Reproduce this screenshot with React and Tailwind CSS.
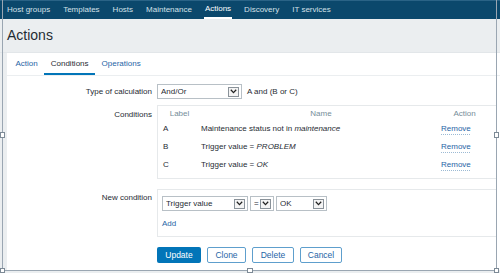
const navItems = ["Host groups", "Templates", "Hosts", "Maintenance", "Actions", "Discovery", "IT services"];

const conditions = [
  { label: "A", name: <>Maintenance status not in <i>maintenance</i></> },
  { label: "B", name: <>Trigger value = <i>PROBLEM</i></> },
  { label: "C", name: <>Trigger value = <i>OK</i></> },
];

function Arrow() {
  return (
    <span className="w-[11px] h-[10px] border border-[#8a9299] bg-[#f4f4f4] flex items-center justify-center shrink-0">
      <svg width="7" height="5" viewBox="0 0 7 5">
        <path d="M0.8 0.8 L3.5 3.6 L6.2 0.8" fill="none" stroke="#222" strokeWidth="1.3" />
      </svg>
    </span>
  );
}

function Select({ value, width }) {
  return (
    <div
      className="h-[15px] border border-[#b8c0c6] bg-white flex items-center pl-[3px] pr-[2px] text-[#1f2c33]"
      style={{ width }}
    >
      <span className="flex-1 truncate">{value}</span>
      <Arrow />
    </div>
  );
}

export default function App() {
  return (
    <div
      className="w-[500px] h-[273px] relative overflow-hidden bg-[#ebeef0] text-[8px] text-[#1f2c33]"
      style={{ fontFamily: '"Liberation Sans", Arial, sans-serif' }}
    >
      <nav className="h-[19px] bg-[#0b486c] border-t border-[#2a6386] flex items-stretch pl-[7px] gap-[13px] text-[8px] text-[#d3e0e8]">
        {navItems.map((item) => (
          <span
            key={item}
            className={
              item === "Actions"
                ? "flex items-center text-white border-b-2 border-white px-[1px] -mx-[1px]"
                : "flex items-center"
            }
          >
            {item}
          </span>
        ))}
      </nav>

      <div className="h-[34px] flex items-center pl-[7px] text-[14px] text-[#1f2c33] border-b border-[#e2e6e9]">
        Actions
      </div>

      <div className="ml-[7px] h-[217px] bg-white">
        <div className="h-[23px] flex items-stretch pl-[2px] border-b border-[#ebeef0]">
          <span className="px-[6.5px] flex items-center text-[#1f65a6]">Action</span>
          <span className="px-[6.5px] flex items-center border-b-2 border-[#0275b8] pt-[2px]">Conditions</span>
          <span className="px-[6.5px] flex items-center text-[#1f65a6]">Operations</span>
        </div>

        <div className="pt-[8px] flex flex-col">
          <div className="flex items-center gap-[5px]">
            <div className="w-[145px] text-right">Type of calculation</div>
            <Select value="And/Or" width="85px" />
            <span>A and (B or C)</span>
          </div>

          <div className="flex gap-[5px] mt-[6px]">
            <div className="w-[145px] text-right pt-[4px]">Conditions</div>
            <div className="flex-1 border border-[#e6e9eb] border-r-0 pt-[2px] pb-[4px] mr-[4px]">
              <div className="grid grid-cols-[43px_240px_1fr] h-[12px] items-center text-[#768d99]">
                <span className="text-center">Label</span>
                <span className="text-center">Name</span>
                <span className="text-center pr-[8px]">Action</span>
              </div>
              {conditions.map((c) => (
                <div key={c.label} className="grid grid-cols-[43px_240px_1fr] h-[18px] items-center">
                  <span className="pl-[5px]">{c.label}</span>
                  <span>{c.name}</span>
                  <span className="text-[#1f65a6] underline decoration-dotted decoration-[#9cbad4] underline-offset-[3px]">
                    Remove
                  </span>
                </div>
              ))}
            </div>
          </div>

          <div className="flex gap-[5px] mt-[10px]">
            <div className="w-[145px] text-right pt-[3px]">New condition</div>
            <div className="flex-1 h-[48px] border border-[#e6e9eb] border-r-0 mr-[4px] pt-[6px] pl-[4px]">
              <div className="flex items-center gap-[2px]">
                <Select value="Trigger value" width="86px" />
                <Select value="=" width="24px" />
                <Select value="OK" width="51px" />
              </div>
              <div className="mt-[7px] text-[#1f65a6]">Add</div>
            </div>
          </div>

          <div className="flex gap-[6px] ml-[150px] mt-[10px] text-[8.5px]">
            <button className="h-[16px] w-[44px] bg-[#0275b8] text-white rounded-[2px]">Update</button>
            <button className="h-[16px] w-[39px] border border-[#5e9fcd] text-[#1f65a6] rounded-[2px]">Clone</button>
            <button className="h-[16px] w-[42px] border border-[#5e9fcd] text-[#1f65a6] rounded-[2px]">Delete</button>
            <button className="h-[16px] w-[42px] border border-[#5e9fcd] text-[#1f65a6] rounded-[2px]">Cancel</button>
          </div>
        </div>
      </div>

      <div className="absolute left-[2px] top-0 w-[495px] h-[271px] border-l border-r border-b border-[#9aa6b2] pointer-events-none" />
      <span className="absolute left-0 top-[132px] w-[5px] h-[6px] bg-white border border-[#7d8a96]" />
      <span className="absolute left-[494px] top-[132px] w-[5px] h-[6px] bg-white border border-[#7d8a96]" />
      <span className="absolute left-[247px] top-[268px] w-[6px] h-[5px] bg-white border border-[#7d8a96]" />
      <span className="absolute left-0 top-[268px] w-[5px] h-[5px] bg-white border border-[#7d8a96]" />
      <span className="absolute left-[494px] top-[268px] w-[5px] h-[5px] bg-white border border-[#7d8a96]" />
    </div>
  );
}
